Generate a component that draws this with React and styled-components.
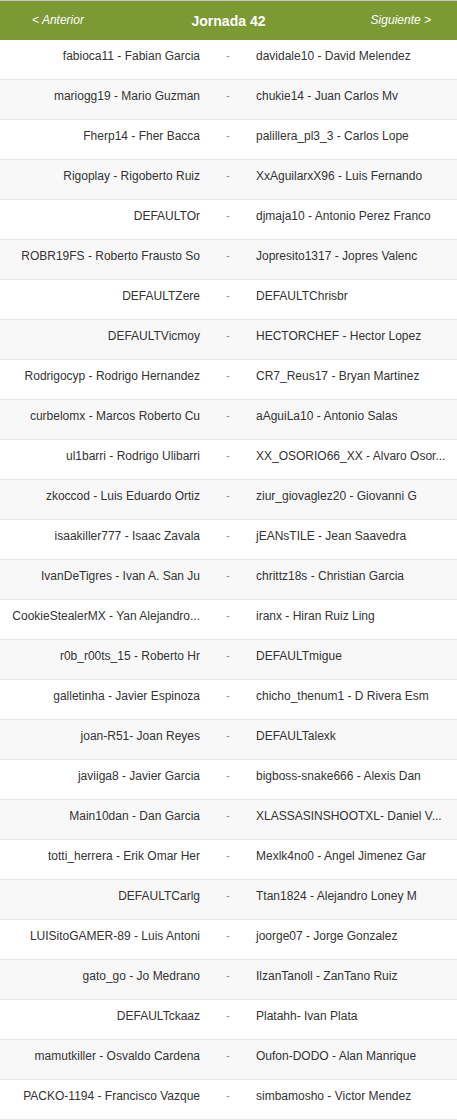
import React from 'react';
import styled, { createGlobalStyle } from 'styled-components';

const GlobalStyle = createGlobalStyle`
  html, body {
    margin: 0;
    padding: 0;
    background: #fff;
  }
  body {
    font-family: "Liberation Sans", Arial, sans-serif;
    color: #333;
  }
`;

const matches = [
  ['fabioca11 - Fabian Garcia', 'davidale10 - David Melendez'],
  ['mariogg19 - Mario Guzman', 'chukie14 - Juan Carlos Mv'],
  ['Fherp14 - Fher Bacca', 'palillera_pl3_3 - Carlos Lope'],
  ['Rigoplay - Rigoberto Ruiz', 'XxAguilarxX96 - Luis Fernando'],
  ['DEFAULTOr', 'djmaja10 - Antonio Perez Franco'],
  ['ROBR19FS - Roberto Frausto So', 'Jopresito1317 - Jopres Valenc'],
  ['DEFAULTZere', 'DEFAULTChrisbr'],
  ['DEFAULTVicmoy', 'HECTORCHEF - Hector Lopez'],
  ['Rodrigocyp - Rodrigo Hernandez', 'CR7_Reus17 - Bryan Martinez'],
  ['curbelomx - Marcos Roberto Cu', 'aAguiLa10 - Antonio Salas'],
  ['ul1barri - Rodrigo Ulibarri', 'XX_OSORIO66_XX - Alvaro Osor...'],
  ['zkoccod - Luis Eduardo Ortiz', 'ziur_giovaglez20 - Giovanni G'],
  ['isaakiller777 - Isaac Zavala', 'jEANsTILE - Jean Saavedra'],
  ['IvanDeTigres - Ivan A. San Ju', 'chrittz18s - Christian Garcia'],
  ['CookieStealerMX - Yan Alejandro...', 'iranx - Hiran Ruiz Ling'],
  ['r0b_r00ts_15 - Roberto Hr', 'DEFAULTmigue'],
  ['galletinha - Javier Espinoza', 'chicho_thenum1 - D Rivera Esm'],
  ['joan-R51- Joan Reyes', 'DEFAULTalexk'],
  ['javiiga8 - Javier Garcia', 'bigboss-snake666 - Alexis Dan'],
  ['Main10dan - Dan Garcia', 'XLASSASINSHOOTXL- Daniel V...'],
  ['totti_herrera - Erik Omar Her', 'Mexlk4no0 - Angel Jimenez Gar'],
  ['DEFAULTCarlg', 'Ttan1824 - Alejandro Loney M'],
  ['LUISitoGAMER-89 - Luis Antoni', 'joorge07 - Jorge Gonzalez'],
  ['gato_go - Jo Medrano', 'IlzanTanoll - ZanTano Ruiz'],
  ['DEFAULTckaaz', 'Platahh- Ivan Plata'],
  ['mamutkiller - Osvaldo Cardena', 'Oufon-DODO - Alan Manrique'],
  ['PACKO-1194 - Francisco Vazque', 'simbamosho - Victor Mendez'],
];

const Wrapper = styled.div`
  width: 457px;
`;

const Header = styled.div`
  display: grid;
  grid-template-columns: 1fr auto 1fr;
  align-items: center;
  height: 39px;
  border-top: 1px solid #c9c9c9;
  background: #7b9a33;
  color: #fff;
`;

const NavLink = styled.a`
  font-size: 12px;
  font-style: italic;
  color: #fff;
  text-decoration: none;
  justify-self: ${(p) => (p.$right ? 'end' : 'start')};
  padding: ${(p) => (p.$right ? '0 26px 1px 0' : '0 0 1px 32px')};
`;

const Title = styled.div`
  font-size: 14px;
  font-weight: bold;
`;

const Row = styled.div`
  display: grid;
  grid-template-columns: 210px 36px 1fr;
  height: 39px;
  border-bottom: 1px solid #e5e5e5;
  background: ${(p) => (p.$alt ? '#f8f8f8' : '#fff')};
  font-size: 12px;
  line-height: 18px;
`;

const Player = styled.div`
  padding-top: 7px;
  white-space: nowrap;
  text-align: ${(p) => (p.$home ? 'right' : 'left')};
  padding-left: ${(p) => (p.$home ? '4px' : '10px')};
  padding-right: ${(p) => (p.$home ? '10px' : '8px')};
`;

const Versus = styled.div`
  padding-top: 7px;
  text-align: center;
  color: #999;
`;

export default function App() {
  return (
    <Wrapper>
      <GlobalStyle />
      <Header>
        <NavLink href="#">&lt; Anterior</NavLink>
        <Title>Jornada 42</Title>
        <NavLink href="#" $right>Siguiente &gt;</NavLink>
      </Header>
      {matches.map(([home, away], i) => (
        <Row key={i} $alt={i % 2 === 1}>
          <Player $home>{home}</Player>
          <Versus>-</Versus>
          <Player>{away}</Player>
        </Row>
      ))}
    </Wrapper>
  );
}
